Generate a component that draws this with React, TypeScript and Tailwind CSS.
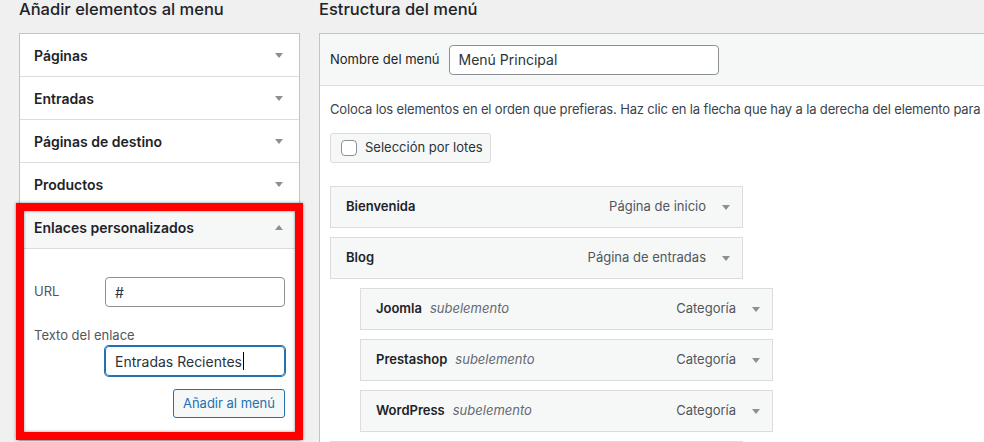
import React from 'react';

type Dir = 'down' | 'up';

const Arrow = ({ dir = 'down' }: { dir?: Dir }) => (
  <svg width="8" height="5" viewBox="0 0 8 5" className="shrink-0">
    {dir === 'down' ? (
      <path d="M0 0h8L4 5z" fill="#8c8f94" />
    ) : (
      <path d="M0 5h8L4 0z" fill="#8c8f94" />
    )}
  </svg>
);

const sections = ['Páginas', 'Entradas', 'Páginas de destino', 'Productos'];

type MenuItem = {
  title: string;
  type: string;
  sub?: boolean;
};

const items: MenuItem[] = [
  { title: 'Bienvenida', type: 'Página de inicio' },
  { title: 'Blog', type: 'Página de entradas' },
  { title: 'Joomla', type: 'Categoría', sub: true },
  { title: 'Prestashop', type: 'Categoría', sub: true },
  { title: 'WordPress', type: 'Categoría', sub: true },
];

const AddItems = () => (
  <div className="w-[281px] shrink-0 ml-[19px]">
    <h2 className="text-[16.5px] leading-[18px] font-medium text-[#1d2327] mb-[15px] whitespace-nowrap">
      Añadir elementos al menu
    </h2>
    <div className="border border-[#c3c4c7] bg-white">
      {sections.map((s) => (
        <div
          key={s}
          className="h-[43px] flex items-center justify-between pl-[14px] pr-[16px] border-b border-[#dcdcde]"
        >
          <span className="text-[14px] font-semibold text-[#1d2327]">{s}</span>
          <Arrow />
        </div>
      ))}
      <div className="h-[43px] flex items-center justify-between pl-[14px] pr-[16px] border-b border-[#dcdcde] bg-[#f6f7f7]">
        <span className="text-[14px] font-semibold text-[#1d2327]">Enlaces personalizados</span>
        <Arrow dir="up" />
      </div>
      <div className="pt-[28px] pb-[22px] pl-[14px] pr-[14px] text-[13px]">
        <div className="flex items-center">
          <span className="w-[71px] text-[#50575e]">URL</span>
          <div className="flex-1 h-[30px] border border-[#8c8f94] rounded-[4px] flex items-center px-[9px] text-[14px] text-[#2c3338]">
            #
          </div>
        </div>
        <div className="mt-[20px] leading-[16px] text-[#50575e]">Texto del enlace</div>
        <div className="flex mt-[3px]">
          <div className="ml-[71px] flex-1 h-[30px] border border-[#2271b1] shadow-[0_0_0_1px_#2271b1] rounded-[4px] flex items-center px-[9px] text-[14px] text-[#2c3338]">
            Entradas Recientes
            <span className="inline-block w-px h-[18px] bg-black ml-px" />
          </div>
        </div>
        <div className="flex justify-end mt-[13px]">
          <button className="h-[29px] px-[9px] border border-[#2271b1] rounded-[3px] bg-[#f6f7f7] text-[13px] text-[#2271b1]">
            Añadir al menú
          </button>
        </div>
      </div>
    </div>
  </div>
);

const Structure = () => (
  <div className="ml-[19px] flex-1 min-w-0">
    <h2 className="text-[16.5px] leading-[18px] font-medium text-[#1d2327] mb-[15px] whitespace-nowrap">
      Estructura del menú
    </h2>
    <div className="w-[800px] border-l border-t border-[#c3c4c7] bg-white h-[420px]">
      <div className="h-[52px] bg-[#f6f7f7] border-b border-[#dcdcde] flex items-center pl-[10px]">
        <span className="text-[13px] text-[#1d2327] mr-[9px]">Nombre del menú</span>
        <div className="w-[270px] h-[30px] border border-[#8c8f94] rounded-[4px] bg-white flex items-center px-[9px] text-[14px] text-[#2c3338]">
          Menú Principal
        </div>
      </div>
      <div className="pl-[10px] pt-[14px]">
        <p className="text-[13px] leading-[18px] tracking-[-0.15px] text-[#3c434a] whitespace-nowrap">
          Coloca los elementos en el orden que prefieras. Haz clic en la flecha que hay a la derecha del elemento para
        </p>
        <div className="mt-[15px] w-[161px] h-[30px] border border-[#dcdcde] rounded-[3px] bg-[#f6f7f7] flex items-center pl-[10px]">
          <span className="w-[16px] h-[16px] border border-[#8c8f94] rounded-[4px] bg-white mr-[8px]" />
          <span className="text-[13px] text-[#2c3338]">Selección por lotes</span>
        </div>
        <div className="mt-[23px] flex flex-col gap-[9px]">
          {items.map((it) => (
            <div
              key={it.title}
              className={`w-[413px] h-[42px] border border-[#dcdcde] bg-[#f6f7f7] flex items-center justify-between pl-[15px] pr-[12px] text-[13px] ${
                it.sub ? 'ml-[30px]' : ''
              }`}
            >
              <div className="flex items-center gap-[8px]">
                <span className="font-semibold text-[#1d2327]">{it.title}</span>
                {it.sub && <span className="italic text-[#646970]">subelemento</span>}
              </div>
              <div className="flex items-center gap-[16px]">
                <span className="text-[#50575e]">{it.type}</span>
                <Arrow />
              </div>
            </div>
          ))}
          <div className="w-[413px] h-[42px] border border-[#dcdcde] bg-[#f6f7f7]" />
        </div>
      </div>
    </div>
  </div>
);

export default function App() {
  return (
    <div className="relative w-[984px] h-[442px] overflow-hidden bg-[#f0f0f1] font-['Inter',sans-serif] antialiased">
      <div className="flex">
        <AddItems />
        <Structure />
      </div>
      {/* red highlight drawn over the custom links panel */}
      <div className="absolute left-[16px] top-[203px] w-[287px] h-[237px] border-[8px] border-[#ff0000] shadow-[0_0_3px_rgba(0,0,0,0.45),inset_0_0_3px_rgba(0,0,0,0.45)]" />
    </div>
  );
}
